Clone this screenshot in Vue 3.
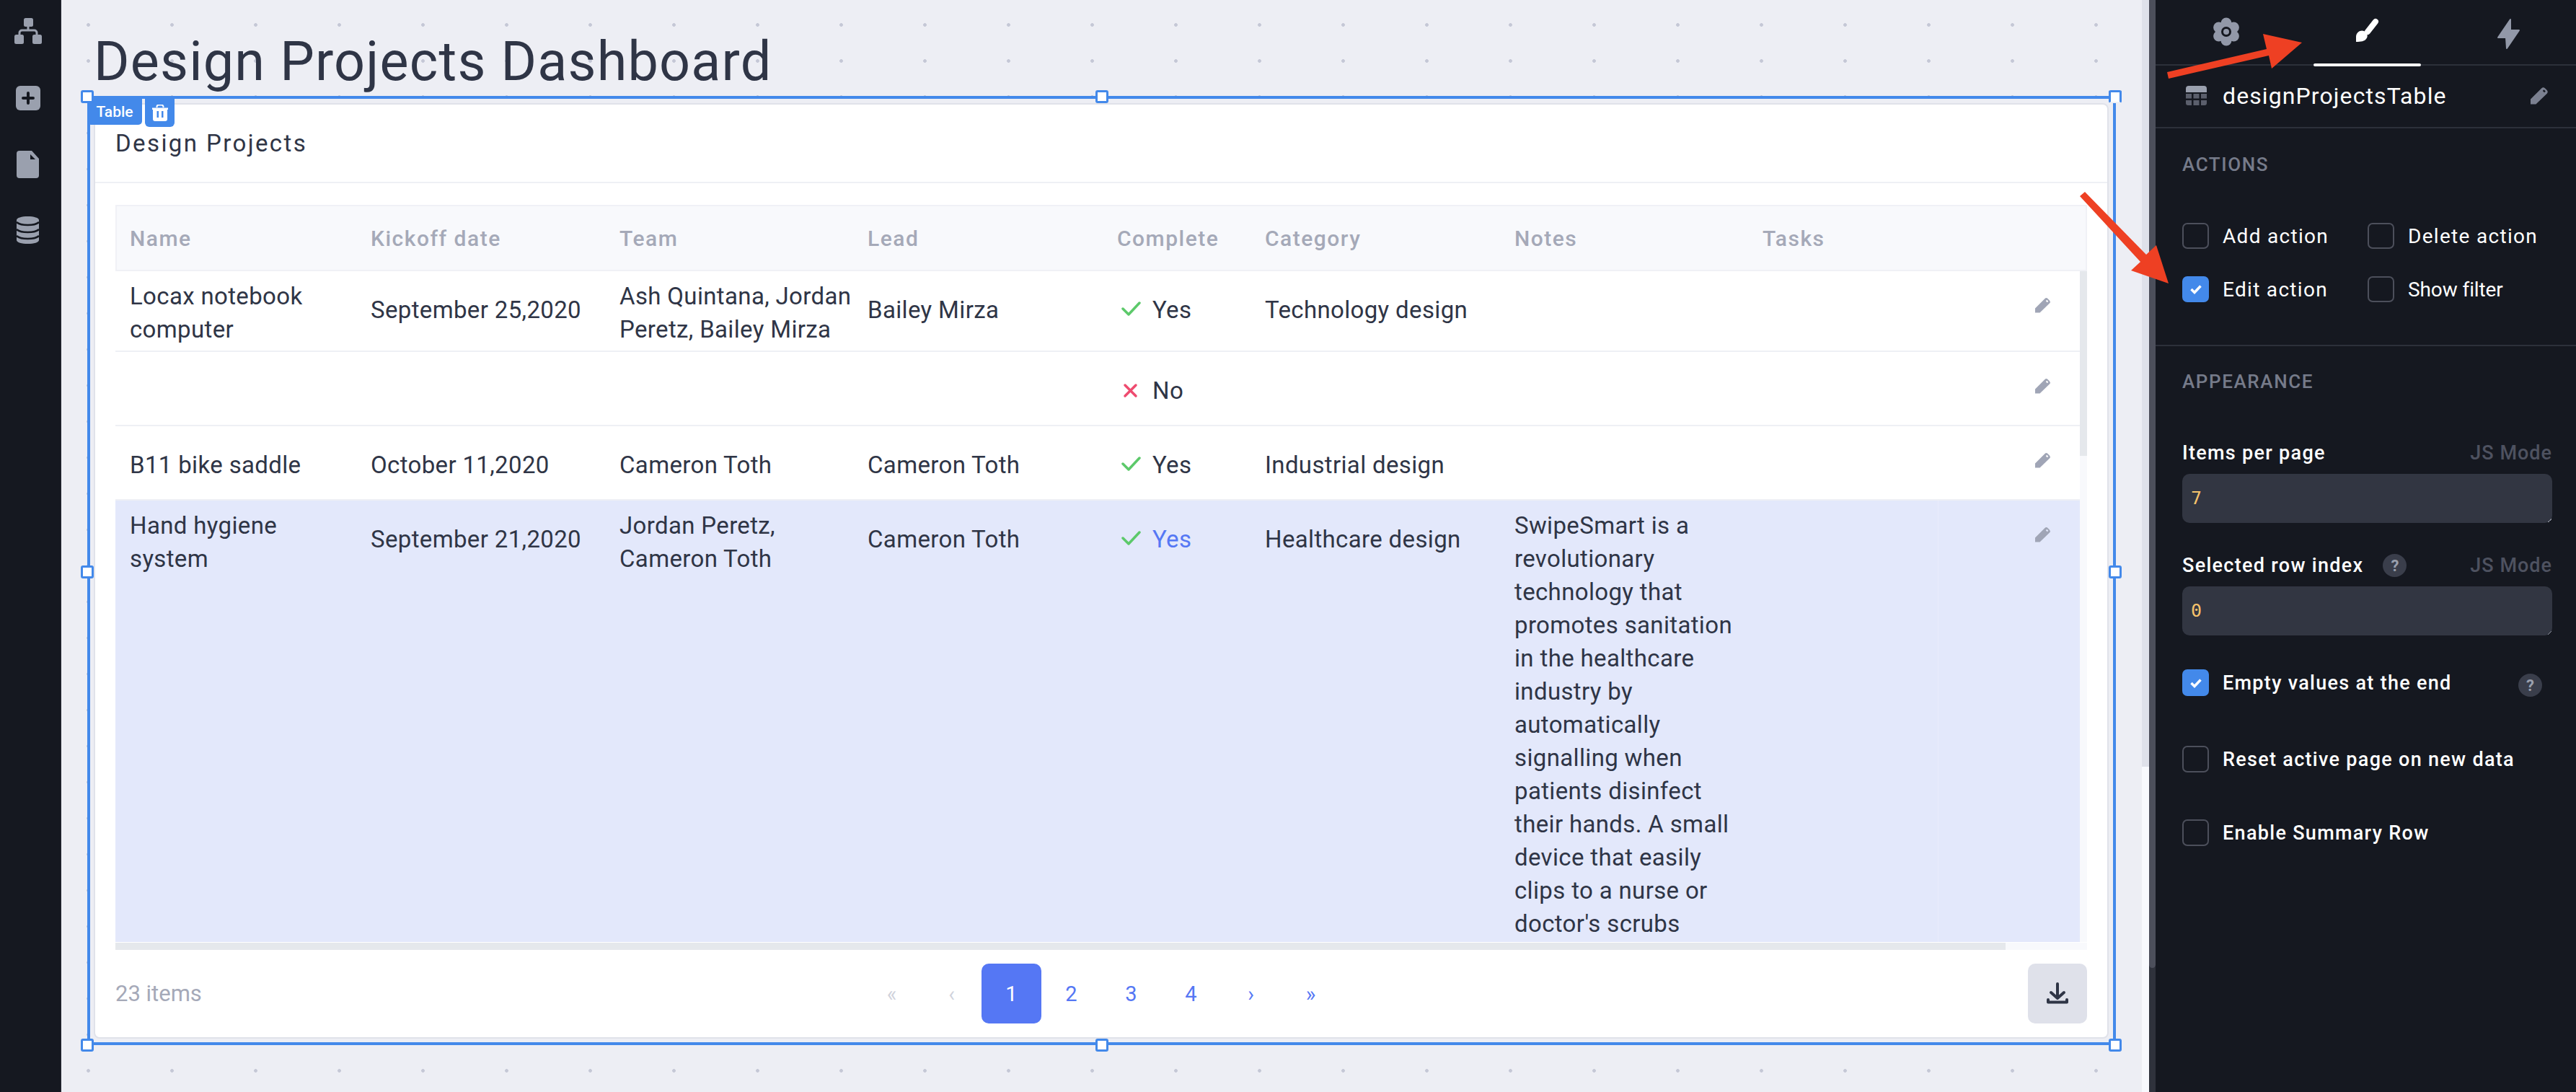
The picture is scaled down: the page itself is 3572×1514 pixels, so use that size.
<script setup>
const columns = ['Name', 'Kickoff date', 'Team', 'Lead', 'Complete', 'Category', 'Notes', 'Tasks', '']

const swipeNote =
  "SwipeSmart is a revolutionary technology that promotes sanitation in the healthcare industry by automatically signalling when patients disinfect their hands. A small device that easily clips to a nurse or doctor's scrubs"

const rows = [
  { name: 'Locax notebook computer', date: 'September 25,2020', team: 'Ash Quintana, Jordan Peretz, Bailey Mirza', lead: 'Bailey Mirza', done: true, category: 'Technology design', notes: '' },
  { name: '', date: '', team: '', lead: '', done: false, category: '', notes: '' },
  { name: 'B11 bike saddle', date: 'October 11,2020', team: 'Cameron Toth', lead: 'Cameron Toth', done: true, category: 'Industrial design', notes: '' },
  { name: 'Hand hygiene system', date: 'September 21,2020', team: 'Jordan Peretz, Cameron Toth', lead: 'Cameron Toth', done: true, category: 'Healthcare design', notes: swipeNote, selected: true },
]

const pages = [
  { label: '«', off: true },
  { label: '‹', off: true },
  { label: '1', active: true },
  { label: '2' },
  { label: '3' },
  { label: '4' },
  { label: '›' },
  { label: '»' },
]

const handles = ['tl', 'tm', 'tr', 'ml', 'mr', 'bl', 'bm', 'br']
</script>

<template>
  <div class="page">
    <aside class="rail">
      <svg class="rail-tree" width="38" height="36" viewBox="0 0 38 36">
        <path d="M19 11v6M7 23v-2.500a3.500 3.500 0 0 1 3.500-3.500h17a3.500 3.500 0 0 1 3.500 3.500V23" fill="none" stroke="#9aa0ae" stroke-width="3" />
        <rect x="13" y="0" width="13" height="12" rx="2.500" fill="#9aa0ae" />
        <rect x="0" y="23" width="13" height="13" rx="2.500" fill="#9aa0ae" />
        <rect x="25" y="23" width="13" height="13" rx="2.500" fill="#9aa0ae" />
      </svg>
      <svg class="rail-add" width="34" height="34" viewBox="0 0 34 34">
        <rect width="34" height="34" rx="6" fill="#9aa0ae" />
        <path d="M17 10v14M10 17h14" stroke="#151820" stroke-width="4" stroke-linecap="round" />
      </svg>
      <svg class="rail-file" width="31" height="38" viewBox="0 0 31 38">
        <path d="M4 0h17l10 11v23a4 4 0 0 1-4 4H4a4 4 0 0 1-4-4V4a4 4 0 0 1 4-4Z" fill="#9aa0ae" />
        <path d="M19 5l7 7h-7Z" fill="#151820" />
      </svg>
      <svg class="rail-db" width="31" height="38" viewBox="0 0 31 38">
        <path d="M0 5c0-3 7-5 15.500-5S31 2 31 5v28c0 3-7 5-15.500 5S0 36 0 33Z" fill="#9aa0ae" />
        <path d="M0 8c3 3 9 4 15.500 4S28 11 31 8M0 18c3 3 9 4 15.500 4S28 21 31 18M0 27c3 3 9 4 15.500 4S28 30 31 27" fill="none" stroke="#151820" stroke-width="2.500" />
      </svg>
    </aside>

    <main class="canvas">
      <h1 class="page-title">Design Projects Dashboard</h1>

      <section class="widget">
        <span v-for="h in handles" :key="h" class="handle" :class="h"></span>
        <div class="tag-row">
          <span class="tag">Table</span>
          <span class="tag tag-trash">
            <svg width="22" height="23" viewBox="0 0 22 23">
              <path d="M6.500 4V3a2.500 2.500 0 0 1 2.500-2.500h4A2.500 2.500 0 0 1 15.500 3v1" fill="none" stroke="#fff" stroke-width="2" />
              <path fill-rule="evenodd" d="M0 4.500h22v2.500h-1v13a3 3 0 0 1-3 3H4a3 3 0 0 1-3-3V7H0ZM6.500 9v9h2.500V9Zm6.500 0v9h2.500V9Z" fill="#fff" />
            </svg>
          </span>
        </div>

        <div class="card">
          <header class="card-head">Design Projects</header>
          <div class="card-body">
            <div class="table">
              <div class="thead">
                <div v-for="c in columns" :key="c" class="th">{{ c }}</div>
              </div>
              <div class="tbody-wrap">
                <div class="tbody">
                  <div v-for="(row, i) in rows" :key="i" class="tr" :class="{ selected: row.selected }">
                    <div class="td">{{ row.name }}</div>
                    <div class="td">{{ row.date }}</div>
                    <div class="td td-team">{{ row.team }}</div>
                    <div class="td">{{ row.lead }}</div>
                    <div class="td td-flag">
                      <svg v-if="row.done" width="49" height="24" viewBox="0 0 49 24">
                        <path d="M8 10l8 8L31 2" fill="none" stroke="#5cc96a" stroke-width="3.500" stroke-linecap="round" stroke-linejoin="round" />
                      </svg>
                      <svg v-else width="49" height="24" viewBox="0 0 49 24">
                        <path d="M11 4l15 15M26 4L11 19" fill="none" stroke="#ee4b6f" stroke-width="3.500" stroke-linecap="round" />
                      </svg>
                      <span class="flag-text">{{ row.done ? 'Yes' : 'No' }}</span>
                    </div>
                    <div class="td">{{ row.category }}</div>
                    <div class="td">{{ row.notes }}</div>
                    <div class="td"></div>
                    <div class="td td-edit">
                      <svg width="22" height="22" viewBox="0 0 22 22">
                        <path fill-rule="evenodd" d="M0 21.500V15.500L13.500 2a3 3 0 0 1 4 0L20 4.500a3 3 0 0 1 0 4L6.500 21.500ZM14.800 5.300l2 2 1.500-1.500-2-2Z" fill="#a0a5b6" />
                      </svg>
                    </div>
                  </div>
                </div>
                <div class="vscroll"><div class="vthumb"></div></div>
              </div>
              <div class="hscroll"><div class="hthumb"></div></div>
            </div>
          </div>
          <footer class="card-foot">
            <span class="count">23 items</span>
            <nav class="pager">
              <span v-for="p in pages" :key="p.label" class="pg" :class="{ off: p.off, active: p.active }">{{ p.label }}</span>
            </nav>
            <button class="dl">
              <svg width="34" height="34" viewBox="0 0 34 34">
                <path d="M17 3v20M8 15l9 8 9-8" fill="none" stroke="#2f3546" stroke-width="4" stroke-linecap="round" stroke-linejoin="round" />
                <path d="M4 25v3.500h26V25" fill="none" stroke="#2f3546" stroke-width="4" stroke-linecap="round" stroke-linejoin="round" />
              </svg>
            </button>
          </footer>
        </div>
      </section>
    </main>

    <div class="page-scroll"><div class="page-thumb"></div></div>
    <div class="panel-scroll"><div class="panel-thumb"></div></div>

    <aside class="panel">
      <div class="tabs">
        <div class="tab">
          <svg width="40" height="40" viewBox="0 0 40 40">
            <g fill="#9298a8">
              <circle cx="20" cy="20" r="14" />
              <circle cx="20" cy="8" r="7.500" /><circle cx="30.400" cy="14" r="7.500" /><circle cx="30.400" cy="26" r="7.500" />
              <circle cx="20" cy="32" r="7.500" /><circle cx="9.600" cy="26" r="7.500" /><circle cx="9.600" cy="14" r="7.500" />
            </g>
            <circle cx="20" cy="20" r="5.500" fill="#9298a8" stroke="#151820" stroke-width="3" />
          </svg>
        </div>
        <div class="tab is-active">
          <svg width="36" height="36" viewBox="0 0 36 36">
            <path d="M29 6L18 20" stroke="#fff" stroke-width="8" stroke-linecap="round" />
            <path d="M2 34v-7c0-7 7-10 11-8 5 2 6 8 3 11-2 3-7 4-14 4Z" fill="#fff" />
          </svg>
        </div>
        <div class="tab">
          <svg width="38" height="46" viewBox="0 0 38 46">
            <path d="M21 3L4 28h11l1 15 17-25H21Z" fill="#9298a8" stroke="#9298a8" stroke-width="2" stroke-linejoin="round" />
          </svg>
        </div>
      </div>

      <div class="name-row">
        <svg width="29" height="27" viewBox="0 0 29 27">
          <path d="M4 0h21a4 4 0 0 1 4 4v5H0V4a4 4 0 0 1 4-4Z" fill="#9aa0ae" />
          <path d="M0 11h8v6.500H0ZM10.500 11h8v6.500h-8ZM21 11h8v6.500h-8ZM0 20h8v7H3a3 3 0 0 1-3-3ZM10.500 20h8v7h-8ZM21 20h8v4a3 3 0 0 1-3 3h-5Z" fill="#5b5f6c" />
        </svg>
        <span class="name-text">designProjectsTable</span>
        <svg class="name-edit" width="25" height="25" viewBox="0 0 22 22">
          <path fill-rule="evenodd" d="M0 21.500V15.500L13.500 2a3 3 0 0 1 4 0L20 4.500a3 3 0 0 1 0 4L6.500 21.500ZM14.800 5.300l2 2 1.500-1.500-2-2Z" fill="#7b8090" />
        </svg>
      </div>

      <section class="group group-actions">
        <h2 class="group-title">ACTIONS</h2>
        <div class="check-grid">
          <label class="check"><span class="box"></span>Add action</label>
          <label class="check"><span class="box"></span>Delete action</label>
          <label class="check">
            <span class="box on"><svg width="18" height="14" viewBox="0 0 18 14"><path d="M2.500 7l4.500 4.500L15.500 2.500" fill="none" stroke="#fff" stroke-width="3.500" /></svg></span>Edit action
          </label>
          <label class="check check-tight"><span class="box"></span>Show filter</label>
        </div>
      </section>

      <section class="group group-look">
        <h2 class="group-title">APPEARANCE</h2>
        <div class="field-head first">
          <span class="field-label">Items per page</span>
          <span class="js-mode">JS Mode</span>
        </div>
        <div class="code">7<i class="grip"></i></div>
        <div class="field-head">
          <span class="field-label">Selected row index</span>
          <span class="help">?</span>
          <span class="js-mode">JS Mode</span>
        </div>
        <div class="code">0<i class="grip"></i></div>
        <label class="check wide first-check">
          <span class="box box-flat on"><svg width="18" height="14" viewBox="0 0 18 14"><path d="M2.500 7l4.500 4.500L15.500 2.500" fill="none" stroke="#fff" stroke-width="3.500" /></svg></span>Empty values at the end
          <span class="help help-end">?</span>
        </label>
        <label class="check wide reset"><span class="box box-flat"></span>Reset active page on new data</label>
        <label class="check wide summary"><span class="box box-flat"></span>Enable Summary Row</label>
      </section>
    </aside>

    <svg class="arrows" width="3572" height="1514" viewBox="0 0 3572 1514">
      <polygon points="3005,100 3143,68 3138,47 3192,59 3150,95 3146,77 3007,109" fill="#ee4023" />
      <polygon points="2884,272 2891,266 2976,353 2990,340 3007,393 2955,375 2968,363" fill="#ee4023" />
    </svg>
  </div>
</template>

<style>
html, body { margin: 0; background: #151820; }
</style>

<style scoped>
.page {
  position: relative;
  display: flex;
  width: 3572px;
  height: 1514px;
  overflow: hidden;
  font-family: Roboto, "Liberation Sans", sans-serif;
  color: #2f3546;
}

/* left rail */
.rail {
  width: 85px;
  flex-shrink: 0;
  box-sizing: border-box;
  background: #151820;
  border-right: 1px solid #2a2d38;
  padding: 25px 7px 0 0;
  display: flex;
  flex-direction: column;
  align-items: center;
}
.rail-add { margin-top: 58px; }
.rail-file { margin-top: 56px; }
.rail-db { margin-top: 53px; }

/* canvas */
.canvas {
  flex: 1;
  min-width: 0;
  box-sizing: border-box;
  padding: 30px 0 0 36px;
  background-color: #edeef4;
  background-image: radial-gradient(circle at 2.500px 2.500px, #c5c8d6 2px, transparent 2.800px);
  background-size: 116px 50px;
  background-position: 35px 32px;
}
.page-title {
  margin: 0 0 0 9px;
  height: 103px;
  font-size: 75.500px;
  font-weight: 400;
  line-height: 110px;
  letter-spacing: 1.2px;
  color: #2f3546;
  white-space: nowrap;
}

/* selection box */
.widget {
  position: relative;
  box-sizing: border-box;
  width: 2813px;
  height: 1316px;
  border: 4px solid #4389ea;
  padding: 6px 6px 5px 5px;
}
.handle {
  position: absolute;
  box-sizing: border-box;
  width: 18px;
  height: 18px;
  background: #fff;
  border: 3px solid #4389ea;
  border-radius: 3px;
  z-index: 3;
}
.handle.tl { left: -13px; top: -12px; }
.handle.tm { left: calc(50% - 9px); top: -12px; }
.handle.tr { right: -12px; top: -12px; }
.handle.ml { left: -13px; top: calc(50% - 7px); }
.handle.mr { right: -12px; top: calc(50% - 7px); }
.handle.bl { left: -13px; bottom: -13px; }
.handle.bm { left: calc(50% - 9px); bottom: -13px; }
.handle.br { right: -12px; bottom: -13px; }

.tag-row {
  position: absolute;
  left: -4px;
  top: -4px;
  display: flex;
  gap: 4px;
  z-index: 2;
}
.tag {
  display: flex;
  align-items: center;
  justify-content: center;
  width: 76px;
  height: 40px;
  padding-top: 3px;
  box-sizing: border-box;
  background: #4389ea;
  border-radius: 0 0 5px 5px;
  color: #fff;
  font-size: 21px;
  font-weight: 500;
}
.tag-trash {
  width: 41px;
  height: 43px;
  border-radius: 0 0 6px 6px;
}

/* card */
.card {
  box-sizing: border-box;
  height: 100%;
  background: #fff;
  border: 2px solid #e0e2ea;
  border-radius: 8px;
  display: flex;
  flex-direction: column;
}
.card-head {
  height: 109px;
  flex-shrink: 0;
  box-sizing: border-box;
  border-bottom: 2px solid #eef0f5;
  padding: 34px 0 0 28px;
  font-size: 33px;
  line-height: 40px;
  font-weight: 400;
  letter-spacing: 2.400px;
}
.card-body {
  padding: 30px 28px 0;
}

/* table */
.table {
  height: 1033px;
  display: flex;
  flex-direction: column;
}
.thead,
.tr {
  display: grid;
  grid-template-columns: 334px 345px 344px 346px 205px 346px 344px 263px 196px;
}
.thead {
  height: 92px;
  flex-shrink: 0;
  box-sizing: border-box;
  background: #f8f9fc;
  border: 2px solid #f0f1f6;
  align-items: center;
}
.th {
  padding-left: 18px;
  font-size: 30px;
  font-weight: 500;
  letter-spacing: 1.500px;
  color: #a5a9b8;
}
.tbody-wrap {
  flex: 1;
  min-height: 0;
  display: flex;
}
.tbody {
  flex: 1;
  min-width: 0;
  overflow: hidden;
}
.tr {
  box-sizing: border-box;
  border-bottom: 2px solid #eef0f5;
  align-items: start;
  background: #fff;
}
.tr.selected {
  background: #e3e8fb;
  border-bottom: 0;
}
.td {
  box-sizing: border-box;
  min-height: 101px;
  padding: 12px 10px 6px 20px;
  display: flex;
  align-items: center;
  font-size: 33px;
  line-height: 46px;
  letter-spacing: 0.35px;
}
.td-team {
  padding-right: 0;
}
.td-flag svg {
  flex-shrink: 0;
}
.selected .flag-text {
  color: #5577f4;
}
.td-edit {
  min-height: 94px;
  padding: 0 0 0 135px;
}
.selected .td-edit {
  box-shadow: inset 1px 0 0 #e9ecfc;
  align-self: stretch;
  align-items: flex-start;
  padding-top: 36px;
}
.vscroll {
  width: 10px;
  background: #f8f9fc;
}
.vthumb {
  height: 256px;
  background: #e5e8ec;
}
.hscroll {
  height: 10px;
  flex-shrink: 0;
  margin-top: 1px;
  background: #f8f9fc;
}
.hthumb {
  width: 2621px;
  height: 100%;
  background: #e5e8ec;
}

/* footer */
.card-foot {
  flex: 1;
  display: flex;
  align-items: center;
  padding: 0 28px 0;
}
.count {
  width: 1035px;
  flex-shrink: 0;
  font-size: 31px;
  color: #a5a9b8;
}
.pager {
  display: flex;
}
.pg {
  width: 83px;
  height: 83px;
  display: flex;
  align-items: center;
  justify-content: center;
  border-radius: 10px;
  font-size: 29px;
  color: #5577f4;
}
.pg.off {
  color: #d0d3dc;
}
.pg.active {
  background: #5577f4;
  color: #fff;
}
.dl {
  margin-left: auto;
  width: 82px;
  height: 83px;
  border: 0;
  padding: 0;
  border-radius: 10px;
  background: #dfe1ea;
  display: flex;
  align-items: center;
  justify-content: center;
}

/* scroll strips */
.page-scroll {
  width: 10px;
  flex-shrink: 0;
  background: #f8f9fd;
}
.page-thumb {
  height: 1063px;
  background: #dfe1ea;
}
.panel-scroll {
  width: 9px;
  flex-shrink: 0;
  background: #2f323c;
}
.panel-thumb {
  height: 1342px;
  background: #4c4f5b;
  border-radius: 0 0 5px 5px;
}

/* right panel */
.panel {
  width: 583px;
  flex-shrink: 0;
  overflow: hidden;
  background: #151820;
  color: #fff;
}
.tabs {
  display: grid;
  grid-template-columns: repeat(3, 196px);
  height: 91px;
  box-sizing: border-box;
  border-bottom: 2px solid #2c303a;
}
.tab {
  position: relative;
  display: flex;
  justify-content: center;
  padding-top: 24px;
}
.tab.is-active::after {
  content: '';
  position: absolute;
  left: 23px;
  bottom: -3px;
  width: 149px;
  height: 4px;
  background: #fff;
  border-radius: 2px;
}
.name-row {
  height: 87px;
  box-sizing: border-box;
  border-bottom: 2px solid #2c303a;
  display: flex;
  align-items: center;
  padding: 0 0 2px 42px;
}
.name-text {
  margin-left: 22px;
  font-size: 32px;
  font-weight: 400;
  letter-spacing: 1.100px;
}
.name-edit {
  margin-left: auto;
  margin-right: 38px;
}
.group {
  box-sizing: border-box;
  padding-left: 37px;
}
.group-actions {
  height: 302px;
  border-bottom: 2px solid #2c303a;
  padding-top: 37px;
}
.group-look {
  padding-top: 36px;
}
.group-title {
  margin: 0;
  font-size: 26px;
  line-height: 26px;
  font-weight: 500;
  letter-spacing: 1.6px;
  color: #767b8a;
}
.check-grid {
  display: grid;
  grid-template-columns: 257px 1fr;
  row-gap: 38px;
  margin-top: 68px;
}
.check {
  display: flex;
  align-items: center;
  height: 36px;
  font-size: 28px;
  font-weight: 400;
  letter-spacing: 1.300px;
  white-space: nowrap;
}
.check-tight {
  letter-spacing: -0.100px;
}
.box {
  box-sizing: border-box;
  width: 37px;
  height: 36px;
  margin-right: 19px;
  border: 2px solid #4c4f5b;
  border-radius: 7px;
  display: flex;
  align-items: center;
  justify-content: center;
  flex-shrink: 0;
}
.box.on {
  background: #4389ea;
  border-color: #4389ea;
}
.box-flat {
  height: 37px;
}
.field-head {
  display: flex;
  align-items: center;
  width: 513px;
  height: 32px;
  margin-top: 43px;
}
.field-head.first {
  margin-top: 70px;
}
.field-label {
  font-size: 27px;
  font-weight: 500;
  letter-spacing: 1.3px;
  white-space: nowrap;
}
.js-mode {
  margin-left: auto;
  font-size: 27px;
  font-weight: 500;
  letter-spacing: 1px;
  color: #4e5260;
}
.help {
  width: 33px;
  height: 32px;
  margin-left: 27px;
  border-radius: 50%;
  background: #3a3e4b;
  color: #9aa0ae;
  display: flex;
  align-items: center;
  justify-content: center;
  font-size: 22px;
  font-weight: 700;
}
.help-end {
  position: absolute;
  left: 466px;
  top: 6px;
  margin: 0;
  letter-spacing: 0;
}
.code {
  position: relative;
  box-sizing: border-box;
  width: 513px;
  height: 68px;
  margin-top: 13px;
  padding: 17px 12px;
  border-radius: 10px;
  background: #323642;
  color: #f5c26b;
  font-family: "DejaVu Sans Mono", "Liberation Mono", monospace;
  font-size: 25px;
  line-height: 34px;
}
.grip {
  position: absolute;
  right: 1px;
  bottom: 1px;
  width: 5px;
  height: 5px;
  background: linear-gradient(135deg, transparent 45%, #8a8e9a 45%, #8a8e9a 60%, transparent 60%);
}
.wide {
  position: relative;
  height: 37px;
  font-size: 27px;
  font-weight: 500;
  letter-spacing: 1.300px;
}
.first-check {
  margin-top: 47px;
}
.reset {
  margin-top: 69px;
}
.summary {
  margin-top: 65px;
}

/* annotation arrows sit over everything */
.arrows {
  position: absolute;
  left: 0;
  top: 0;
  pointer-events: none;
  z-index: 10;
}
</style>
